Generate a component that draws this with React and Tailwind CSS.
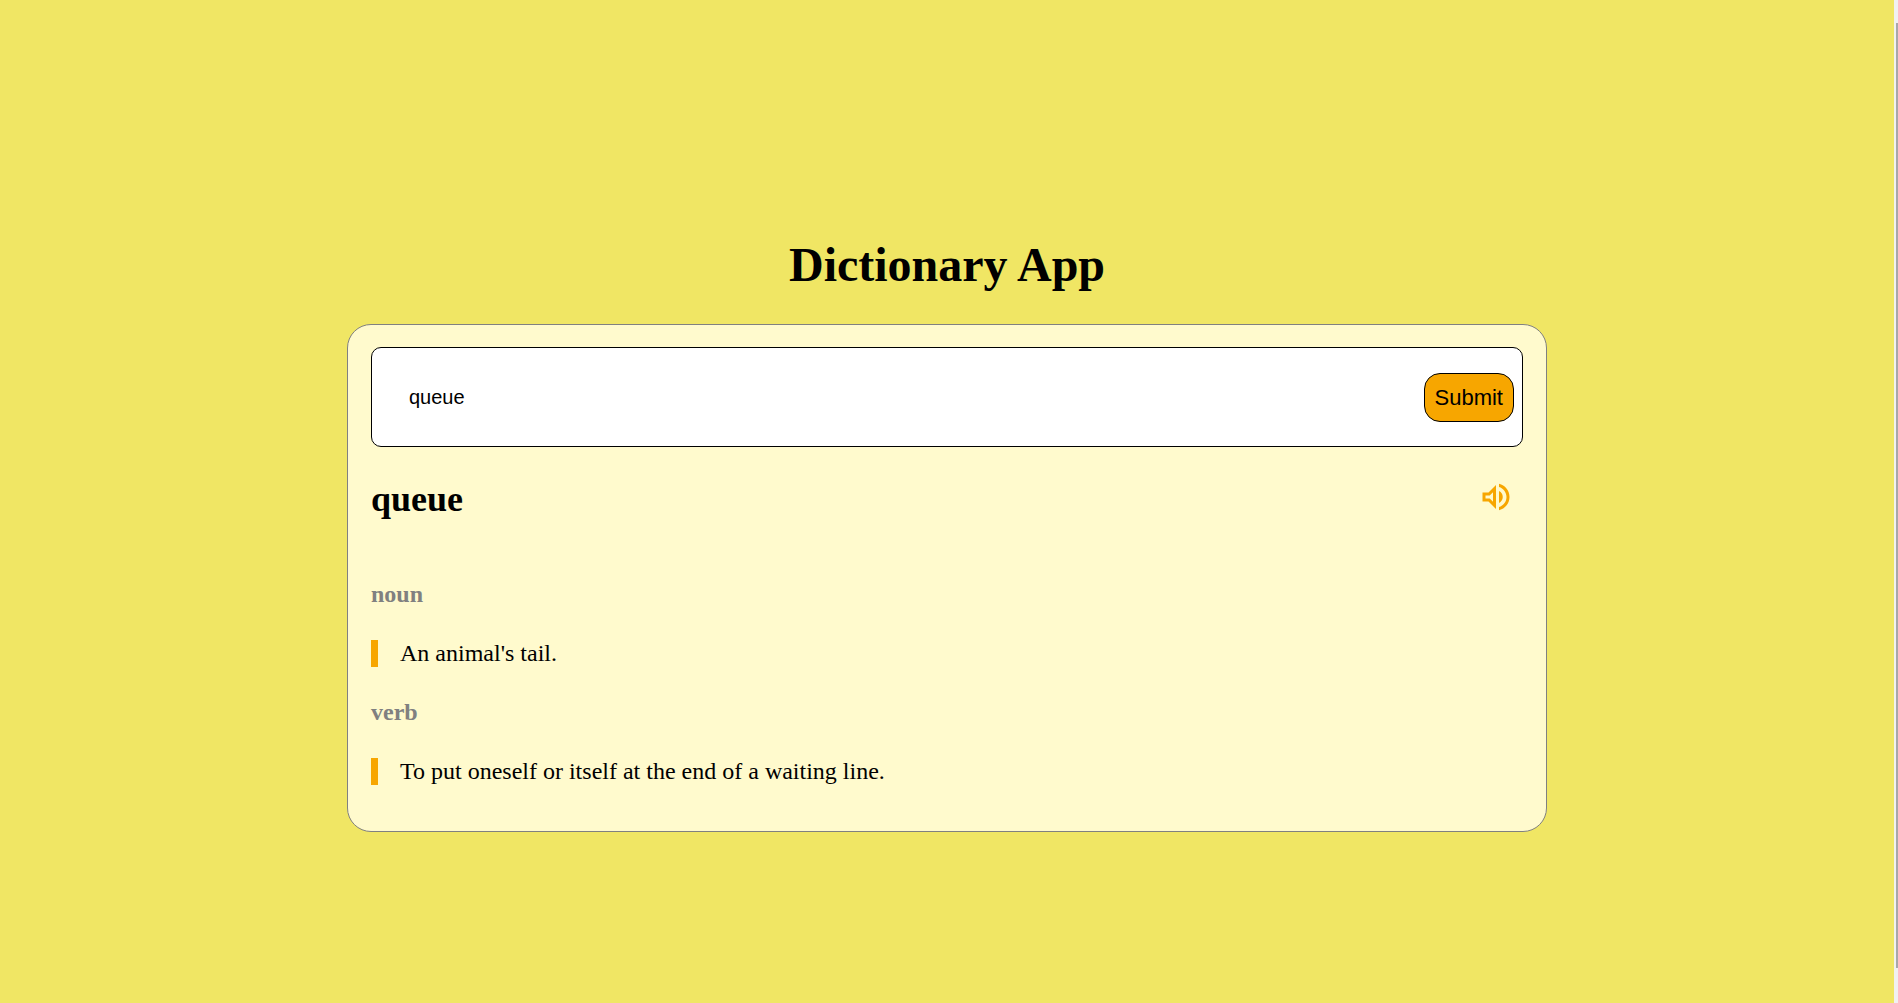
import { useState } from "react";
import { MdOutlineVolumeUp } from "react-icons/md";

const entries = [
  { part: "noun", definition: "An animal's tail." },
  { part: "verb", definition: "To put oneself or itself at the end of a waiting line." },
];

function SearchForm({ value, onChange }) {
  return (
    <form
      onSubmit={(e) => e.preventDefault()}
      className="flex h-[100px] items-center rounded-[10px] border border-black bg-white pr-2"
    >
      <input
        type="text"
        aria-label="Word"
        value={value}
        onChange={(e) => onChange(e.target.value)}
        className="h-full min-w-0 flex-1 bg-transparent pl-[37px] font-['Liberation_Sans',Arial,sans-serif] text-[20px] outline-none"
      />
      <button
        type="submit"
        className="h-[49px] rounded-[16px] border border-black bg-[#f7a600] px-[10px] font-['Liberation_Sans',Arial,sans-serif] text-[22px]"
      >
        Submit
      </button>
    </form>
  );
}

function Entry({ part, definition }) {
  return (
    <section className="flex flex-col gap-8">
      <h3 className="text-[24px] leading-[27px] font-bold text-[#808080]">{part}</h3>
      <p className="border-l-[7px] border-[#f7a600] pl-[22px] text-[24px] leading-[27px]">{definition}</p>
    </section>
  );
}

export default function App() {
  const [word, setWord] = useState("queue");
  return (
    <div className="flex min-h-screen bg-[#f0e664] font-['Liberation_Serif','Times_New_Roman',serif] text-black">
      <main className="flex flex-1 flex-col items-center justify-center px-6 pt-[67px]">
        <div className="flex w-full max-w-[1200px] flex-col gap-8">
          <h1 className="text-center text-[48px] leading-[54px] font-bold">Dictionary App</h1>
          <div className="rounded-[24px] border border-[#808080] bg-[#fffacd] px-[23px] pt-[22px] pb-[46px]">
            <SearchForm value={word} onChange={setWord} />
            <div className="mt-8 flex h-10 items-start justify-between pr-[9px]">
              <h2 className="text-[36px] leading-10 font-bold">queue</h2>
              <button type="button" aria-label="Play pronunciation" className="text-[#f7a600]">
                <MdOutlineVolumeUp size={36} />
              </button>
            </div>
            <div className="mt-[62px] flex flex-col gap-8">
              {entries.map((entry) => (
                <Entry key={entry.part} {...entry} />
              ))}
            </div>
          </div>
        </div>
      </main>
      <div aria-hidden="true" className="flex w-1 justify-end bg-[#f1f1f1] pt-[23px] pb-[35px]">
        <div className="w-0.5 bg-[#a8a8a8]" />
      </div>
    </div>
  );
}
